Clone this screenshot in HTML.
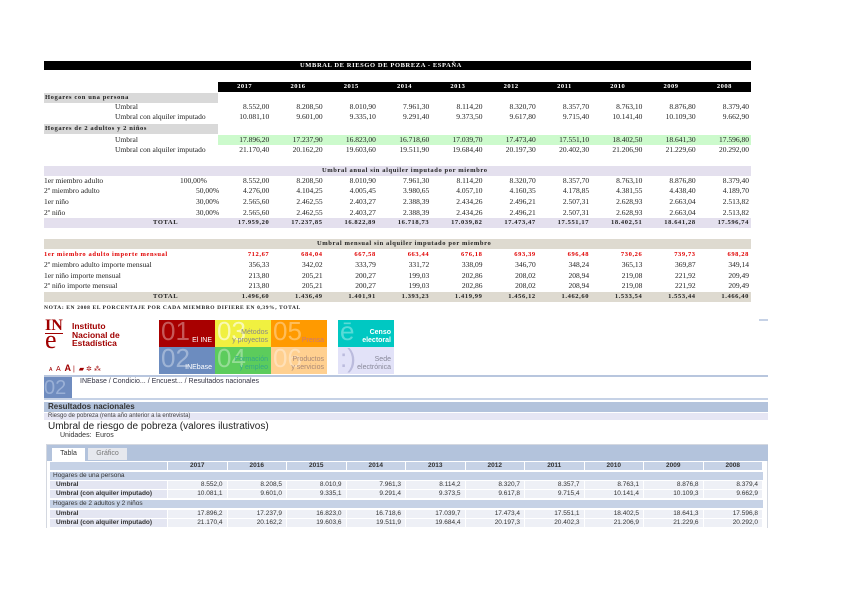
<!DOCTYPE html>
<html><head><meta charset="utf-8"><style>
*{margin:0;padding:0;box-sizing:border-box}
body{width:848px;height:600px;background:#fff;position:relative;overflow:hidden;font-family:"Liberation Serif",serif;font-size:7.5px;color:#222}
.a{position:absolute;white-space:nowrap}
.row{position:absolute;left:218px;display:flex;height:10px;line-height:10px}
.row span{width:53.3px;text-align:right;padding-right:2px}
.hd span{text-align:center;padding:0;color:#fff;font-weight:bold;font-size:6.5px;letter-spacing:.5px}
.b{font-weight:bold;letter-spacing:.6px;font-size:6.5px}
.s{font-family:"Liberation Sans",sans-serif}
.tr{position:absolute;left:50px;display:flex;height:8px;line-height:8px;font-family:"Liberation Sans",sans-serif;font-size:6.5px;color:#333}
.tr span{width:59.5px;text-align:right;padding-right:4px;background:#eef0f6;margin-right:0;border-right:1px solid #fff}
.tr span.l{width:118px;text-align:left;padding-left:6px;background:#e4e6f2;font-weight:bold}
.tr.h span{text-align:center;padding:0;background:#c6d2e6;font-weight:bold}
.tile{position:absolute;width:56px;height:27px;font-family:"Liberation Sans",sans-serif;color:#fff;font-size:7px;text-align:right;padding:2px 3px;line-height:8px;overflow:hidden}
.tile i{position:absolute;left:2px;top:-4px;font-style:normal;font-size:26px;opacity:.35;line-height:30px}
.tile b{position:absolute;right:3px;bottom:2px;font-weight:normal}
</style></head><body>
<!-- top black bar -->
<div class="a" style="left:44px;top:61px;width:707px;height:9px;background:#000"></div>
<div class="a b" style="left:300px;top:61px;color:#fff;line-height:9px;font-size:6.5px">UMBRAL DE RIESGO DE POBREZA - ESPAÑA</div>
<div class="a" style="left:218px;top:82px;width:533px;height:10px;background:#000"></div>
<div class="row hd" style="top:82px"><span>2017</span><span>2016</span><span>2015</span><span>2014</span><span>2013</span><span>2012</span><span>2011</span><span>2010</span><span>2009</span><span>2008</span></div>
<div class="a" style="left:44px;top:93px;width:174px;height:10px;background:#d9d9d9"></div>
<div class="a b" style="left:45px;top:93px;line-height:10px">Hogares con una persona</div>
<div class="a" style="left:115px;top:102px;line-height:10px">Umbral</div>
<div class="row" style="top:102px"><span>8.552,00</span><span>8.208,50</span><span>8.010,90</span><span>7.961,30</span><span>8.114,20</span><span>8.320,70</span><span>8.357,70</span><span>8.763,10</span><span>8.876,80</span><span>8.379,40</span></div>
<div class="a" style="left:115px;top:112px;line-height:10px">Umbral con alquiler imputado</div>
<div class="row" style="top:112px"><span>10.081,10</span><span>9.601,00</span><span>9.335,10</span><span>9.291,40</span><span>9.373,50</span><span>9.617,80</span><span>9.715,40</span><span>10.141,40</span><span>10.109,30</span><span>9.662,90</span></div>
<div class="a" style="left:44px;top:124px;width:174px;height:10px;background:#d9d9d9"></div>
<div class="a b" style="left:45px;top:124px;line-height:10px">Hogares de 2 adultos y 2 niños</div>
<div class="a" style="left:218px;top:135px;width:533px;height:10px;background:#ccfacc"></div>
<div class="a" style="left:115px;top:135px;line-height:10px">Umbral</div>
<div class="row" style="top:135px"><span>17.896,20</span><span>17.237,90</span><span>16.823,00</span><span>16.718,60</span><span>17.039,70</span><span>17.473,40</span><span>17.551,10</span><span>18.402,50</span><span>18.641,30</span><span>17.596,80</span></div>
<div class="a" style="left:115px;top:145px;line-height:10px">Umbral con alquiler imputado</div>
<div class="row" style="top:145px"><span>21.170,40</span><span>20.162,20</span><span>19.603,60</span><span>19.511,90</span><span>19.684,40</span><span>20.197,30</span><span>20.402,30</span><span>21.206,90</span><span>21.229,60</span><span>20.292,00</span></div>

<div class="a" style="left:44px;top:166px;width:707px;height:10px;background:#e4e0ee"></div>
<div class="a b" style="left:322px;top:166px;line-height:10px">Umbral anual sin alquiler imputado por miembro</div>
<div class="a" style="left:44px;top:176px;line-height:10px">1er miembro adulto</div><div class="a" style="left:180px;top:176px;line-height:10px">100,00%</div>
<div class="row" style="top:176px"><span>8.552,00</span><span>8.208,50</span><span>8.010,90</span><span>7.961,30</span><span>8.114,20</span><span>8.320,70</span><span>8.357,70</span><span>8.763,10</span><span>8.876,80</span><span>8.379,40</span></div>
<div class="a" style="left:44px;top:186px;line-height:10px">2º miembro adulto</div><div class="a" style="left:196px;top:186px;line-height:10px">50,00%</div>
<div class="row" style="top:186px"><span>4.276,00</span><span>4.104,25</span><span>4.005,45</span><span>3.980,65</span><span>4.057,10</span><span>4.160,35</span><span>4.178,85</span><span>4.381,55</span><span>4.438,40</span><span>4.189,70</span></div>
<div class="a" style="left:44px;top:197px;line-height:10px">1er niño</div><div class="a" style="left:196px;top:197px;line-height:10px">30,00%</div>
<div class="row" style="top:197px"><span>2.565,60</span><span>2.462,55</span><span>2.403,27</span><span>2.388,39</span><span>2.434,26</span><span>2.496,21</span><span>2.507,31</span><span>2.628,93</span><span>2.663,04</span><span>2.513,82</span></div>
<div class="a" style="left:44px;top:208px;line-height:10px">2º niño</div><div class="a" style="left:196px;top:208px;line-height:10px">30,00%</div>
<div class="row" style="top:208px"><span>2.565,60</span><span>2.462,55</span><span>2.403,27</span><span>2.388,39</span><span>2.434,26</span><span>2.496,21</span><span>2.507,31</span><span>2.628,93</span><span>2.663,04</span><span>2.513,82</span></div>
<div class="a" style="left:44px;top:218px;width:707px;height:10px;background:#e4e0ee"></div>
<div class="a b" style="left:153px;top:218px;line-height:10px">TOTAL</div>
<div class="row b" style="top:218px"><span>17.959,20</span><span>17.237,85</span><span>16.822,89</span><span>16.718,73</span><span>17.039,82</span><span>17.473,47</span><span>17.551,17</span><span>18.402,51</span><span>18.641,28</span><span>17.596,74</span></div>

<div class="a" style="left:44px;top:239px;width:707px;height:10px;background:#dedad0"></div>
<div class="a b" style="left:317px;top:239px;line-height:10px">Umbral mensual sin alquiler imputado por miembro</div>
<div class="a b" style="left:44px;top:250px;line-height:10px;color:#e00000">1er miembro adulto importe mensual</div>
<div class="row b" style="top:250px;color:#e00000"><span>712,67</span><span>684,04</span><span>667,58</span><span>663,44</span><span>676,18</span><span>693,39</span><span>696,48</span><span>730,26</span><span>739,73</span><span>698,28</span></div>
<div class="a" style="left:44px;top:260px;line-height:10px">2º miembro adulto importe mensual</div>
<div class="row" style="top:260px"><span>356,33</span><span>342,02</span><span>333,79</span><span>331,72</span><span>338,09</span><span>346,70</span><span>348,24</span><span>365,13</span><span>369,87</span><span>349,14</span></div>
<div class="a" style="left:44px;top:271px;line-height:10px">1er niño importe mensual</div>
<div class="row" style="top:271px"><span>213,80</span><span>205,21</span><span>200,27</span><span>199,03</span><span>202,86</span><span>208,02</span><span>208,94</span><span>219,08</span><span>221,92</span><span>209,49</span></div>
<div class="a" style="left:44px;top:281px;line-height:10px">2º niño importe mensual</div>
<div class="row" style="top:281px"><span>213,80</span><span>205,21</span><span>200,27</span><span>199,03</span><span>202,86</span><span>208,02</span><span>208,94</span><span>219,08</span><span>221,92</span><span>209,49</span></div>
<div class="a" style="left:44px;top:292px;width:707px;height:10px;background:#dedad0"></div>
<div class="a b" style="left:153px;top:292px;line-height:10px">TOTAL</div>
<div class="row b" style="top:292px"><span>1.496,60</span><span>1.436,49</span><span>1.401,91</span><span>1.393,23</span><span>1.419,99</span><span>1.456,12</span><span>1.462,60</span><span>1.533,54</span><span>1.553,44</span><span>1.466,40</span></div>
<div class="a b" style="left:44px;top:304px;line-height:8px;font-size:5.5px">NOTA: EN 2008 EL PORCENTAJE POR CADA MIEMBRO DIFIERE EN 0,39%, TOTAL</div>

<!-- INE header -->
<div class="a" style="left:45px;top:319px;font-family:'Liberation Serif',serif;color:#a00000;font-size:16px;line-height:14px;font-weight:bold">IN</div>
<div class="a" style="left:45px;top:333px;width:18px;height:1px;background:#a00000"></div>
<div class="a" style="left:45px;top:327px;font-family:'Liberation Serif',serif;color:#a00000;font-size:26px;line-height:26px">e</div>
<div class="a s" style="left:72px;top:322px;color:#a00000;font-size:8.5px;line-height:8.5px;font-weight:bold">Instituto<br>Nacional de<br>Estadística</div>
<div class="a s" style="left:49px;top:363px;color:#a00000;font-size:7px;line-height:10px">ᴀ&nbsp; A&nbsp; <b style="font-size:9px">A</b> |&nbsp; ▰ ✲ ⁂</div>

<div class="tile" style="left:159px;top:320px;background:#a80000"><i>01</i><b>El INE</b></div>
<div class="tile" style="left:215px;top:320px;background:#f0f040;color:#888"><i style="color:#fff;opacity:.6">03</i><b>Métodos<br>y proyectos</b></div>
<div class="tile" style="left:271px;top:320px;background:#ff9a00;color:#c77"><i style="color:#fff">05</i><b>Prensa</b></div>
<div class="tile" style="left:338px;top:320px;background:#00c8c2"><i>ē</i><b style="font-weight:bold">Censo<br>electoral</b></div>
<div class="tile" style="left:159px;top:347px;background:#6c8cbf"><i>02</i><b>INEbase</b></div>
<div class="tile" style="left:215px;top:347px;background:#5ccc5c;color:#3a8"><i style="color:#fff">04</i><b>Formación<br>y empleo</b></div>
<div class="tile" style="left:271px;top:347px;background:#ffd090;color:#a87"><i style="color:#fff">06</i><b>Productos<br>y servicios</b></div>
<div class="tile" style="left:338px;top:347px;background:#e2e2f8;color:#889"><i style="color:#bbd;opacity:1">:)</i><b>Sede<br>electrónica</b></div>
<div class="a" style="left:759px;top:319px;width:9px;height:2px;background:#c6d2e6"></div>

<div class="a" style="left:44px;top:375px;width:724px;height:2px;background:#b8c6de"></div>
<div class="a s" style="left:44px;top:377px;width:28px;height:22px;background:#6f8cbf;color:#9ab0d6;font-size:20px;line-height:22px">02</div>
<div class="a s" style="left:80px;top:377px;font-size:7px;color:#334;line-height:9px">INEbase / Condicio... / Encuest... / Resultados nacionales</div>
<div class="a" style="left:44px;top:398px;width:724px;height:2px;background:#c6d2e6"></div>
<div class="a s" style="left:44px;top:402px;width:724px;height:10px;background:#b3c3dc;font-weight:bold;font-size:8px;line-height:10px;padding-left:4px;color:#333">Resultados nacionales</div>
<div class="a s" style="left:44px;top:413px;width:724px;height:7px;background:#e6e6f4;font-size:6px;line-height:7px;padding-left:4px;color:#444">Riesgo de pobreza (renta año anterior a la entrevista)</div>
<div class="a s" style="left:48px;top:421px;font-size:10px;line-height:12px;color:#222">Umbral de riesgo de pobreza (valores ilustrativos)</div>
<div class="a s" style="left:60px;top:432px;font-size:7px;line-height:8px;color:#333">Unidades:&nbsp; Euros</div>

<div class="a" style="left:46px;top:444px;width:722px;height:84px;border:1px solid #d4d8e0;border-bottom:none"></div>
<div class="a" style="left:47px;top:445px;width:721px;height:16px;background:#b3c3dc"></div>
<div class="a s" style="left:52px;top:448px;width:33px;height:13px;background:#fff;font-size:7px;line-height:12px;text-align:center;color:#333">Tabla</div>
<div class="a s" style="left:88px;top:448px;width:39px;height:12px;background:#e6e8ee;font-size:7px;line-height:12px;text-align:center;color:#777">Gráfico</div>
<div class="tr h" style="top:462px"><span class="l" style="background:#c6d2e6"></span><span>2017</span><span>2016</span><span>2015</span><span>2014</span><span>2013</span><span>2012</span><span>2011</span><span>2010</span><span>2009</span><span>2008</span></div>
<div class="a s" style="left:50px;top:472px;width:713px;height:8px;background:#c6d2e6;font-size:6.5px;line-height:8px;padding-left:3px;color:#333">Hogares de una persona</div>
<div class="tr" style="top:481px"><span class="l">Umbral</span><span>8.552,0</span><span>8.208,5</span><span>8.010,9</span><span>7.961,3</span><span>8.114,2</span><span>8.320,7</span><span>8.357,7</span><span>8.763,1</span><span>8.876,8</span><span>8.379,4</span></div>
<div class="tr" style="top:490px"><span class="l">Umbral (con alquiler imputado)</span><span>10.081,1</span><span>9.601,0</span><span>9.335,1</span><span>9.291,4</span><span>9.373,5</span><span>9.617,8</span><span>9.715,4</span><span>10.141,4</span><span>10.109,3</span><span>9.662,9</span></div>
<div class="a s" style="left:50px;top:500px;width:713px;height:8px;background:#c6d2e6;font-size:6.5px;line-height:8px;padding-left:3px;color:#333">Hogares de 2 adultos y 2 niños</div>
<div class="tr" style="top:510px"><span class="l">Umbral</span><span>17.896,2</span><span>17.237,9</span><span>16.823,0</span><span>16.718,6</span><span>17.039,7</span><span>17.473,4</span><span>17.551,1</span><span>18.402,5</span><span>18.641,3</span><span>17.596,8</span></div>
<div class="tr" style="top:519px"><span class="l">Umbral (con alquiler imputado)</span><span>21.170,4</span><span>20.162,2</span><span>19.603,6</span><span>19.511,9</span><span>19.684,4</span><span>20.197,3</span><span>20.402,3</span><span>21.206,9</span><span>21.229,6</span><span>20.292,0</span></div>
</body></html>
